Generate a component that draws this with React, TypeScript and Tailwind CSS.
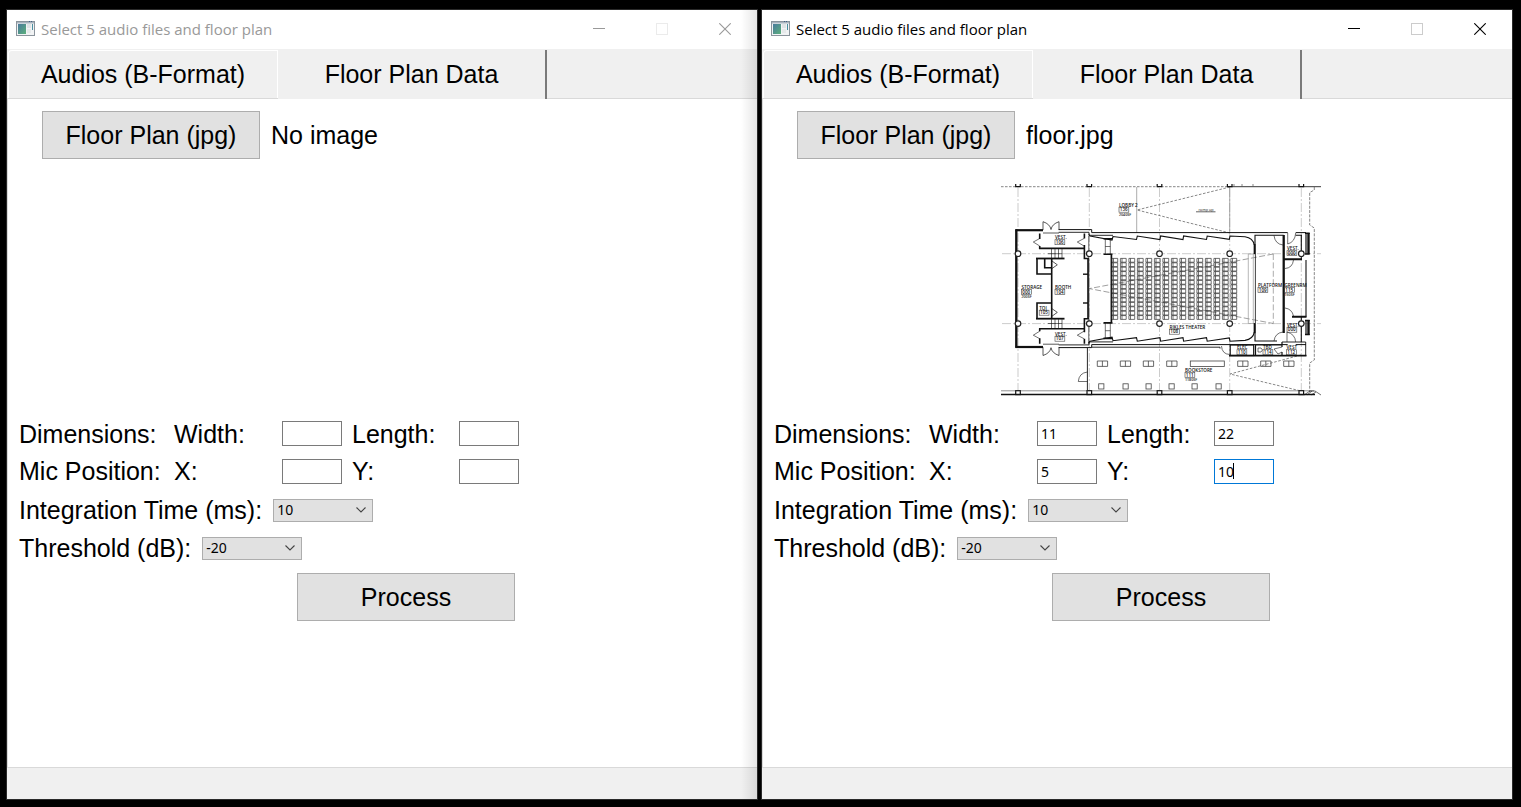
import React, { useId, useState } from "react";

type Point = [number, number];

const COLUMN_X = [17, 88.3, 158.5, 228.7, 300.3];
const GRID_Y = [69.7, 139.6];

function AppIcon() {
  return (
    <svg width="19" height="16" viewBox="0 0 19 16" aria-hidden="true">
      <defs>
        <linearGradient id="app-icon-screen" x1="0" y1="0" x2="1" y2="1">
          <stop offset="0" stopColor="#4a7a9c" />
          <stop offset="1" stopColor="#5cb07c" />
        </linearGradient>
      </defs>
      <rect x="0.5" y="0.5" width="18" height="14" fill="#f1f3f4" stroke="#8b949c" />
      <rect x="1" y="1" width="17" height="1.5" fill="#a9b4bf" />
      <rect x="13" y="0" width="1" height="1" fill="#3f6186" />
      <rect x="15" y="0" width="1" height="1" fill="#3f6186" />
      <rect x="2" y="3" width="8" height="10" fill="url(#app-icon-screen)" />
      <rect x="11" y="3" width="4" height="4" fill="#dfe3e5" />
      <rect x="11" y="8" width="4" height="4" fill="#e6e9ea" />
      <rect x="16" y="3" width="1" height="6" fill="#4a8fa0" />
    </svg>
  );
}

/* One half of the plan's symmetric wall run; the other half is mirrored. */
function HallWalls() {
  return (
    <g fill="none" stroke="#111">
      <path
        strokeWidth="1.1"
        d="M87.7 50.3 L89 52 L111 56 L112 52.5 L135.5 55.5 L136.3 52 L159 55.5 L159.6 52 L182 55.5 L182.6 52 L205.5 55.5 L206.2 52 L228.3 55.3 L229 52 L244 52.8 Q252 54 253.3 61"
      />
      <path strokeWidth="1.9" d="M253.6 60 V70" />
      <path strokeWidth="1" d="M57.7 45.6 H90.7 V48.6 H286.7 M294.7 48.6 H305" />
      <path strokeWidth="0.9" d="M57.7 48.3 H88 V51.3 H112" />
      <path strokeWidth="2.2" d="M14.5 46.2 H42" />
      <path strokeWidth="1.6" d="M38.7 49.5 V55 M38.7 62 V65 M38 64.4 H84 M83.4 49.5 V54.5 M83.4 61 V74.5 H87.6" />
      <path strokeWidth="0.6" d="M38.7 54.5 L32.3 58 L38.7 62 M83 54.5 L76.3 58 L83 62" />
      <path strokeWidth="0.7" d="M42 46 V37.7 Q49 40 50 45.5 Q51 40 58 37.7 V46 M42 49 H58" />
      <path strokeWidth="0.6" d="M50.5 65 V74 M54 65 V74 M57.5 65 V74 M61 65 V74 M47 69.7 H61" />
      <path strokeWidth="0.6" d="M104.3 54.5 V71 M109.3 54.5 V71 M104.3 62.5 H109.3" />
      <path strokeWidth="1.6" d="M102.5 54.8 H111.5 M102.5 70.3 H111.5" />
      <path strokeWidth="1.8" d="M35 74.5 H63.5" />
      <path strokeWidth="1.4" d="M82 90.2 H87" />
      <path strokeWidth="0.7" d="M51 77 L56.3 80.8 L51 84.5" />
    </g>
  );
}

function RoomLabel({ at, name, code, area }: { at: Point; name: string; code: string; area?: string }) {
  const [x, y] = at;
  return (
    <g fill="#111" fontFamily="'Open Sans', 'Liberation Sans', sans-serif" fontSize="4.6" fontWeight="600">
      <text x={x} y={y}>{name}</text>
      <rect x={x} y={y + 0.7} width="9.8" height="5" fill="none" stroke="#444" strokeWidth="0.6" />
      <text x={x + 0.8} y={y + 4.9}>{code}</text>
      {area && <text x={x} y={y + 9.3} fontSize="3.6">{area}</text>}
    </g>
  );
}

function FloorPlan() {
  const seats: Point[] = [];
  for (let c = 0; c < 15; c++) {
    for (let r = 0; r < 14; r++) seats.push([110.9 + c * 8.5, 74.4 + r * 4.4]);
  }
  return (
    <svg width="320" height="213" viewBox="0 0 320 213" role="img" aria-label="Floor plan">
      <rect width="320" height="213" fill="#fff" />

      <g fill="none" stroke="#aaa" strokeWidth="0.6" strokeDasharray="9 2 2 2">
        {COLUMN_X.map((x) => <path key={x} d={`M${x} 4 V207`} />)}
        {GRID_Y.map((y) => <path key={y} d={`M1 ${y} H320`} />)}
      </g>

      <g fill="none" stroke="#555" strokeWidth="0.7">
        <path d="M0 2.7 H229" strokeDasharray="2.6 1.4" />
        <path d="M229 2.7 H320" stroke="#222" strokeWidth="0.9" />
        <path d="M233 0 V2.5 M241 0 V2.5 M252 0 V2.5" />
        <path d="M135.7 3 V49 M228.7 3 V49" stroke="#888" />
        <path d="M229 3 L136 26 L229 49" strokeDasharray="2.6 1.6" />
        <path d="M313.3 3 V6 L308.7 8.5 V41 L313.3 44 V176 L308.7 179 V208" strokeDasharray="3 1.3" />
        <path d="M272.3 70 L88.3 104.6 L272.3 139.5" strokeDasharray="6 2.4" stroke="#777" />
        <path d="M272.3 70 V139.5" strokeDasharray="6 2.4" stroke="#888" />
        <path d="M300 171 L229 190 L300 207" strokeDasharray="2.6 1.6" />
        <path d="M247.3 70 V139.5 M252.3 70 V139.5 M247.3 70 H254 M247.3 139.5 H254" stroke="#999" />
      </g>

      <g fill="#fff" stroke="#111" strokeWidth="1.2">
        {COLUMN_X.map((x) => (
          <React.Fragment key={x}>
            <path d={`M${x - 2.3} 0 V2.6 H${x + 2.3} V0`} />
            <rect x={x - 2.3} y="206.6" width="4.6" height="4" />
          </React.Fragment>
        ))}
      </g>

      <HallWalls />
      <g transform="matrix(1 0 0 -1 0 209.2)"><HallWalls /></g>

      <g fill="none" stroke="#111">
        <path strokeWidth="2.4" d="M15.3 45.3 V163.8" />
        <path strokeWidth="1.6" d="M87 74 V135 M50.7 74 V135" />
        <path strokeWidth="1.6" d="M36 74 V90 H50.7 M43.7 74 V83.7 H50.7 M36 135 V119 H50.7" />
        <path strokeWidth="0.7" d="M87.8 52 V160" />
        <path strokeWidth="1.7" d="M110.4 71 V138" />
        <path strokeWidth="1.1" d="M254 70 V51.3 H282.7 M254 139 V157 H276" />
        <path strokeWidth="0.8" d="M254.4 70 V139" />
        <path strokeWidth="2.3" d="M282.7 51 V149" />
        <path strokeWidth="0.6" d="M273 51.5 Q274 60 282 61 M273 157 Q274 149 282 148 M286.7 49 V60 Q294 58 294.7 49 M284 84.5 Q291.5 84 292.5 76 M284 124 Q291 125 292.5 132 M286 158 V148 Q294 150 294.7 158" />
        <path strokeWidth="1.1" d="M300.3 51 V75 M300.3 133 V158 M305 76 V132.7 M294.7 51.3 H301" />
        <path strokeWidth="1.9" d="M283 75.3 H301 M291 132.7 H305.5" />
        <path strokeWidth="1.2" d="M305 49 V70 M305 136 V151" />
        <path strokeWidth="2.4" d="M307.5 49 V70 M307.5 136 V151" />
        <path strokeWidth="1.6" d="M304 49.2 H308.7 M304 70 H308.7 M304 136.5 H308.7 M304 150.5 H308.7" />
        <path strokeWidth="0.9" d="M90.7 163.2 H219 V164.5 M254.5 161 H281 M281 158 H304.7 V172" />
        <rect x="229.2" y="161" width="23.5" height="10.5" strokeWidth="1.2" />
        <path strokeWidth="1.7" d="M228 171.6 H305.5" />
        <path strokeWidth="1.2" d="M254.5 161 V172 M281 158 V163 M281 168 V172" />
        <path strokeWidth="0.6" d="M220.5 162 Q221 170 228.5 170.5 M281 163 L273 165 L277 170 L281 168 M257 164 H260 Q263 166 260 168 H257 Z" />
        <path strokeWidth="0.9" d="M86.4 164 V207" />
        <path strokeWidth="0.6" d="M86.4 188 Q78 189 77.3 197.5 H86.4" />
        <path strokeWidth="0.6" stroke="#444" d="M0 206.8 H313" />
        <path strokeWidth="1.7" d="M0 210.5 H314" />
        <path strokeWidth="0.6" d="M303 211 L309 207 L314 207 L320 211 M306 211 L311 207 M310 211 L315 208" />
      </g>

      <g fill="#fff" stroke="#222" strokeWidth="1.2">
        {COLUMN_X.map((x) => GRID_Y.map((y) => <circle key={`${x}-${y}`} cx={x} cy={y} r="2.8" />))}
      </g>

      <g fill="none" stroke="#333" strokeWidth="0.7">
        {seats.map(([x, y]) => (
          <path key={`${x}-${y}`} d={`M${x} ${y} h5.8 v3.8 h-5.8 Z M${x + 1.6} ${y} v3.8`} />
        ))}
      </g>

      <g fill="none" stroke="#444" strokeWidth="0.8">
        {[96.3, 119.3, 142.3, 165.7, 236.7, 259.7, 282.7].map((x) => (
          <path key={x} d={`M${x} 177 h10.3 v5.4 h-10.3 Z M${x + 5.1} 177 v5.4`} />
        ))}
        <rect x="189.3" y="177" width="34" height="5.4" />
        {[97.7, 122, 145, 168, 191, 215].map((x) => (
          <rect key={x} x={x} y="199.8" width="5.2" height="5.2" />
        ))}
      </g>

      <RoomLabel at={[118, 22.5]} name="LOBBY 2" code="136" area="2040SF" />
      <RoomLabel at={[54, 55]} name="VEST." code="106" />
      <RoomLabel at={[54, 151.5]} name="VEST." code="107" />
      <RoomLabel at={[20.5, 105]} name="STORAGE" code="000" area="200SF" />
      <RoomLabel at={[54, 105]} name="BOOTH" code="104" />
      <RoomLabel at={[38.2, 125.5]} name="TOI" code="105" />
      <RoomLabel at={[257, 103]} name="PLATFORM" code="109" />
      <RoomLabel at={[283.5, 103]} name="GREENRM" code="115" area="150SF" />
      <RoomLabel at={[286, 66]} name="VEST." code="000" />
      <RoomLabel at={[286, 142.5]} name="VEST." code="000" />
      <RoomLabel at={[168.5, 144.5]} name="RIKLES THEATER" code="108" />
      <RoomLabel at={[236, 165]} name="ELEC" code="110" />
      <RoomLabel at={[262, 165]} name="TBD" code="114" />
      <RoomLabel at={[285.5, 165]} name="VEST" code="112" />
      <RoomLabel at={[184, 187.6]} name="BOOKSTORE" code="111" area="1180SF" />
      <text x="197.5" y="27.2" fontSize="3.8" fill="#222" fontFamily="'Open Sans', 'Liberation Sans', sans-serif">ramp up</text>
      <path d="M195 27.8 H214.5" stroke="#222" strokeWidth="0.7" />
    </svg>
  );
}

function NumberBox({ id, initial, focused = false }: { id: string; initial: string; focused?: boolean }) {
  const [value, setValue] = useState(initial);
  return (
    <span className="relative block h-[25px] w-[60px]">
      <input
        id={id}
        type="text"
        value={value}
        onChange={(e) => setValue(e.target.value)}
        className={`block h-full w-full border bg-white px-[3px] font-['Noto_Sans','Open_Sans',sans-serif] text-sm text-black outline-none ${
          focused ? "border-[#0078d7]" : "border-[#7a7a7a]"
        }`}
      />
      {focused && <span className="pointer-events-none absolute top-1 left-[19px] h-4 w-px bg-black" />}
    </span>
  );
}

function Choice({ id, options, initial }: { id: string; options: string[]; initial: string }) {
  return (
    <span className="relative block h-[23px] w-[100px]">
      <select
        id={id}
        defaultValue={initial}
        className="block h-full w-full appearance-none border border-[#adadad] bg-[#e1e1e1] px-[3px] font-['Noto_Sans','Open_Sans',sans-serif] text-sm leading-5 text-black outline-none"
      >
        {options.map((o) => <option key={o}>{o}</option>)}
      </select>
      <svg className="pointer-events-none absolute top-2 right-[7px]" width="10" height="6" viewBox="0 0 10 6" aria-hidden="true">
        <path d="M0.5 0.5 L5 5 L9.5 0.5" fill="none" stroke="#444" strokeWidth="1.1" />
      </svg>
    </span>
  );
}

interface Plan {
  file: string;
  loaded: boolean;
  width: string;
  length: string;
  x: string;
  y: string;
}

function ToolWindow({ active, plan }: { active: boolean; plan: Plan }) {
  const id = useId();
  const glyph = active ? "text-black" : "text-[#999]";
  const boxGlyph = active ? "text-[#ccc]" : "text-[#ebebeb]";
  return (
    <section className="relative flex min-w-0 flex-1 flex-col bg-white outline outline-[#2a2a2a]">
      <header className="flex h-[39px] items-center pb-px pl-[9px]">
        <AppIcon />
        <h1 className={`ml-1.5 flex-1 truncate font-['Open_Sans','Noto_Sans',sans-serif] text-[15px] leading-5 ${active ? "text-black" : "text-[#999]"}`}>
          Select 5 audio files and floor plan
        </h1>
        <button aria-label="Minimize" className={`flex h-full w-[63px] items-center justify-center ${glyph}`}>
          <svg width="12" height="12" viewBox="0 0 12 12"><path d="M0 5.5 H12" stroke="currentColor" /></svg>
        </button>
        <button aria-label="Maximize" disabled className={`flex h-full w-[63px] items-center justify-center ${boxGlyph}`}>
          <svg width="12" height="12" viewBox="0 0 12 12"><rect x="0.5" y="0.5" width="11" height="11" fill="none" stroke="currentColor" /></svg>
        </button>
        <button aria-label="Close" className={`flex h-full w-16 items-center justify-center ${glyph}`}>
          <svg width="12" height="12" viewBox="0 0 12 12"><path d="M0.3 0.3 L11.7 11.7 M11.7 0.3 L0.3 11.7" stroke="currentColor" strokeWidth="1.1" /></svg>
        </button>
      </header>

      <div role="tablist" className="flex h-[50px] bg-[#f0f0f0] pt-px">
        <button role="tab" aria-selected="false" className="h-full w-[271px] border-b border-[#d9d9d9]">
          <span className="ml-px flex h-full items-center justify-center rounded-tl-sm border-t border-r border-l border-white pb-0.5">Audios (B-Format)</span>
        </button>
        <button role="tab" aria-selected="true" className="w-[269px] border-r-2 border-[#7a7a7a] pb-0.5">
          Floor Plan Data
        </button>
        <div className="flex-1 border-b border-[#d9d9d9]" />
      </div>

      <main className="flex-1 border-b border-l border-[#d9d9d9] pt-3 pl-[11px]">
        <div className="flex items-center pl-[23px]">
          <button className="h-12 w-[218px] border border-[#adadad] bg-[#e1e1e1]">Floor Plan (jpg)</button>
          <span className="ml-[11px]">{plan.file}</span>
        </div>
        <div className="mt-[25px] flex h-[231px] justify-center pl-9">{plan.loaded && <FloorPlan />}</div>

        <div className="grid grid-cols-[155px_108px_70px_107px_60px] grid-rows-[37px_38px] items-center">
          <span>Dimensions:</span>
          <label htmlFor={`${id}-w`}>Width:</label>
          <NumberBox id={`${id}-w`} initial={plan.width} />
          <label htmlFor={`${id}-l`}>Length:</label>
          <NumberBox id={`${id}-l`} initial={plan.length} />
          <span className="whitespace-nowrap">Mic Position:</span>
          <label htmlFor={`${id}-x`}>X:</label>
          <NumberBox id={`${id}-x`} initial={plan.x} />
          <label htmlFor={`${id}-y`}>Y:</label>
          <NumberBox id={`${id}-y`} initial={plan.y} focused={active} />
        </div>
        <div className="mt-px flex h-[38px] items-center gap-[11px]">
          <label htmlFor={`${id}-t`}>Integration Time (ms):</label>
          <Choice id={`${id}-t`} options={["5", "10", "20"]} initial="10" />
        </div>
        <div className="flex h-[38px] items-center gap-[11px]">
          <label htmlFor={`${id}-d`}>Threshold (dB):</label>
          <Choice id={`${id}-d`} options={["-10", "-20", "-30"]} initial="-20" />
        </div>
        <div className="mt-1.5 flex justify-center pl-9">
          <button className="h-12 w-[218px] border border-[#adadad] bg-[#e1e1e1]">Process</button>
        </div>
      </main>

      <footer className="h-[31px] bg-[#f0f0f0]" />
      {!active && (
        <div className="pointer-events-none absolute inset-y-0 right-0 w-4 bg-linear-to-r from-transparent to-black/10" />
      )}
    </section>
  );
}

export default function App() {
  return (
    <div className="flex min-h-screen gap-[5px] bg-black pt-2.5 pr-[9px] pb-2 pl-[7px] font-['Liberation_Sans',Arial,sans-serif] text-[25px] leading-8 text-black">
      <ToolWindow active={false} plan={{ file: "No image", loaded: false, width: "", length: "", x: "", y: "" }} />
      <ToolWindow active plan={{ file: "floor.jpg", loaded: true, width: "11", length: "22", x: "5", y: "10" }} />
    </div>
  );
}
